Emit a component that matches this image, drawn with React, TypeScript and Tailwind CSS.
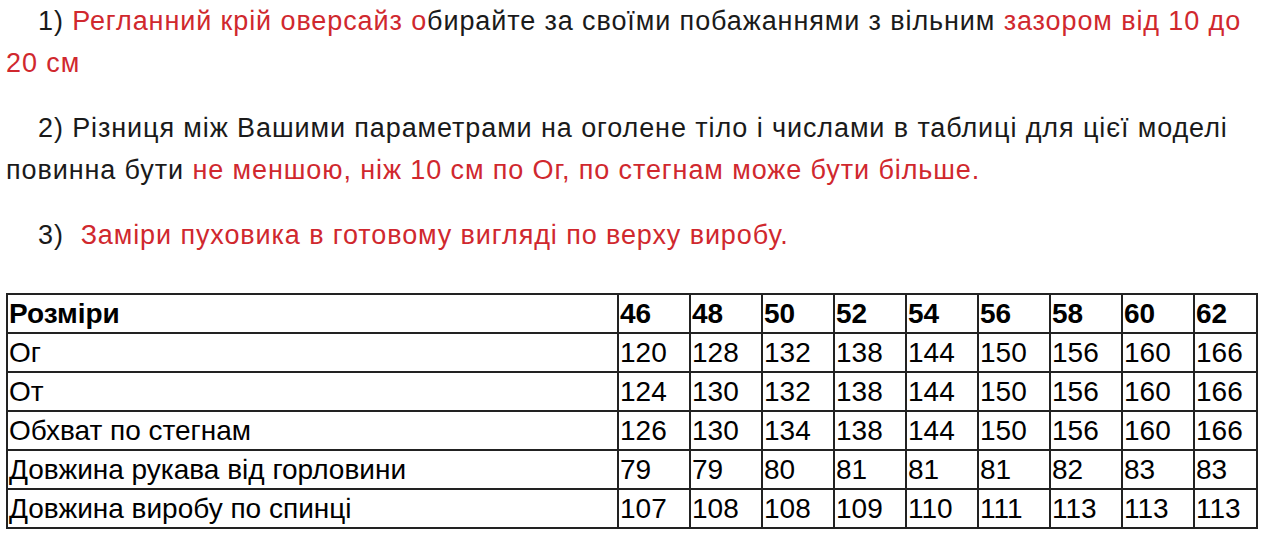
import React from "react";

const rows: [string, string[]][] = [
  ["Ог", ["120", "128", "132", "138", "144", "150", "156", "160", "166"]],
  ["От", ["124", "130", "132", "138", "144", "150", "156", "160", "166"]],
  ["Обхват по стегнам", ["126", "130", "134", "138", "144", "150", "156", "160", "166"]],
  ["Довжина рукава від горловини", ["79", "79", "80", "81", "81", "81", "82", "83", "83"]],
  ["Довжина виробу по спинці", ["107", "108", "108", "109", "110", "111", "113", "113", "113"]],
];
const sizes = ["46", "48", "50", "52", "54", "56", "58", "60", "62"];

export default function App() {
  return (
    <div className="w-[1280px] h-[534px] bg-white overflow-hidden" style={{ fontFamily: '"Liberation Sans", Arial, sans-serif' }}>
      <div className="pl-[6px] pr-[16px] pt-0 text-[27px] leading-[42px] tracking-[0.9px] text-[#1a1a1a]">
        <p className="indent-[32px]">
          1) <span className="text-[#d0282e]">Регланний крій оверсайз о</span>бирайте за своїми побажаннями з вільним <span className="text-[#d0282e]">зазором від 10 до 20 см</span>
        </p>
        <p className="indent-[32px] mt-[23px]">
          2) Різниця між Вашими параметрами на оголене тіло і числами в таблиці для цієї моделі повинна бути <span className="text-[#d0282e]">не меншою, ніж 10 см по Ог, по стегнам може бути більше.</span>
        </p>
        <p className="indent-[32px] mt-[23px]">
          3)&nbsp; <span className="text-[#d0282e]">Заміри пуховика в готовому вигляді по верху виробу.</span>
        </p>
      </div>
      <table className="ml-[6px] mt-[37px] border-collapse table-fixed text-[28px] text-black leading-[37px]">
        <colgroup>
          <col className="w-[611px]" />
          {sizes.map((s, i) => (
            <col key={s} className={i === 8 ? "w-[63px]" : "w-[72px]"} />
          ))}
        </colgroup>
        <tbody>
          <tr>
            <td className="border-2 border-[#222] px-[1px] font-bold">Розміри</td>
            {sizes.map((s) => (
              <td key={s} className="border-2 border-[#222] px-[1px] font-bold">{s}</td>
            ))}
          </tr>
          {rows.map(([label, vals]) => (
            <tr key={label}>
              <td className="border-2 border-[#222] px-[1px] whitespace-nowrap">{label}</td>
              {vals.map((v, i) => (
                <td key={i} className="border-2 border-[#222] px-[1px]">{v}</td>
              ))}
            </tr>
          ))}
        </tbody>
      </table>
    </div>
  );
}
